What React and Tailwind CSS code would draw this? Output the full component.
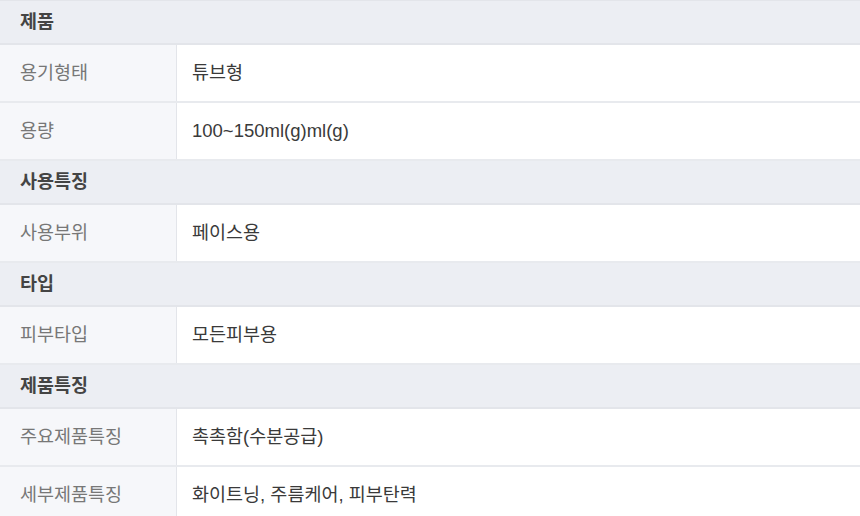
import React from "react";

const sections = [
  {
    title: "제품",
    rows: [
      { label: "용기형태", value: "튜브형" },
      { label: "용량", value: "100~150ml(g)ml(g)" },
    ],
  },
  { title: "사용특징", rows: [{ label: "사용부위", value: "페이스용" }] },
  { title: "타입", rows: [{ label: "피부타입", value: "모든피부용" }] },
  {
    title: "제품특징",
    rows: [
      { label: "주요제품특징", value: "촉촉함(수분공급)" },
      { label: "세부제품특징", value: "화이트닝, 주름케어, 피부탄력" },
    ],
  },
];

const App = () => {
  return (
    <div
      className="w-[860px] h-[516px] overflow-hidden bg-white text-[18.5px]"
      style={{ fontFamily: '"Liberation Sans", "Noto Sans CJK KR", sans-serif' }}
    >
      <div className="border-t border-[#e3e5ea]">
        {sections.map((s) => (
          <div key={s.title}>
            {/* section header */}
            <div className="h-[44px] flex items-center px-5 bg-[#eceef3] border-b-2 border-[#e3e5ea] font-bold text-[#444]">
              {s.title}
            </div>
            {s.rows.map((r) => (
              <div
                key={r.label}
                className="h-[58px] flex border-b-2 border-[#e8eaee]"
              >
                <div className="w-[177px] shrink-0 flex items-center px-5 bg-[#f6f7fa] border-r border-[#e3e5ea] text-[#777]">
                  {r.label}
                </div>
                <div className="flex-1 flex items-center px-[15px] text-[#3a3a3a]">
                  {r.value}
                </div>
              </div>
            ))}
          </div>
        ))}
      </div>
    </div>
  );
};

export default App;
